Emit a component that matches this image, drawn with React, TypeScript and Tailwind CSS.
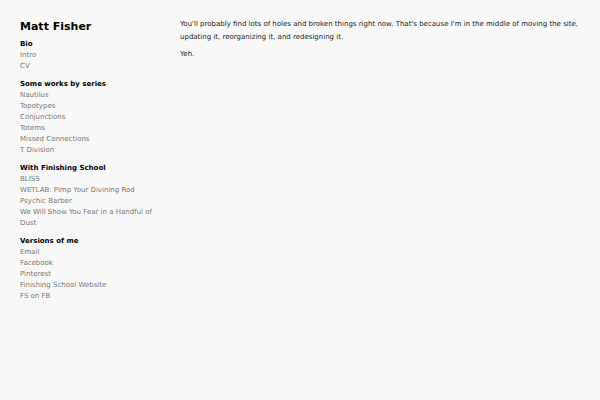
const sections = [
  { title: 'Bio', items: ['Intro', 'CV'] },
  {
    title: 'Some works by series',
    items: ['Nautilus', 'Topotypes', 'Conjunctions', 'Totems', 'Missed Connections', 'T Division'],
  },
  {
    title: 'With Finishing School',
    items: ['BLISS', 'WETLAB: Pimp Your Divining Rod', 'Psychic Barber', 'We Will Show You Fear in a Handful of Dust'],
  },
  {
    title: 'Versions of me',
    items: ['Email', 'Facebook', 'Pinterest', 'Finishing School Website', 'FS on FB'],
  },
];

export default function App() {
  return (
    <div className="min-h-screen w-[600px] h-[400px] bg-[#f8f8f8] text-black font-['DejaVu_Sans',sans-serif]">
      <div className="flex pl-5 pt-[18px]">
        {/* Sidebar */}
        <aside className="w-[160px] shrink-0 pt-[1px]">
          <h1 className="font-bold text-[11px] leading-[16px] mb-[4px]">Matt Fisher</h1>
          {sections.map((s) => (
            <div key={s.title} className="mb-[7px]">
              <div className="font-bold text-[7px] leading-[11px]">{s.title}</div>
              <ul className="w-[135px]">
                {s.items.map((i) => (
                  <li key={i} className="text-[7px] leading-[11px] text-[#777]">
                    {i}
                  </li>
                ))}
              </ul>
            </div>
          ))}
        </aside>

        {/* Main */}
        <main className="w-[400px] text-[7px] leading-[13px] text-[#222]">
          <p className="mb-[4px]">
            You'll probably find lots of holes and broken things right now. That's because I'm in the middle of moving
            the site, updating it, reorganizing it, and redesigning it.
          </p>
          <p>Yeh.</p>
        </main>
      </div>
    </div>
  );
}
